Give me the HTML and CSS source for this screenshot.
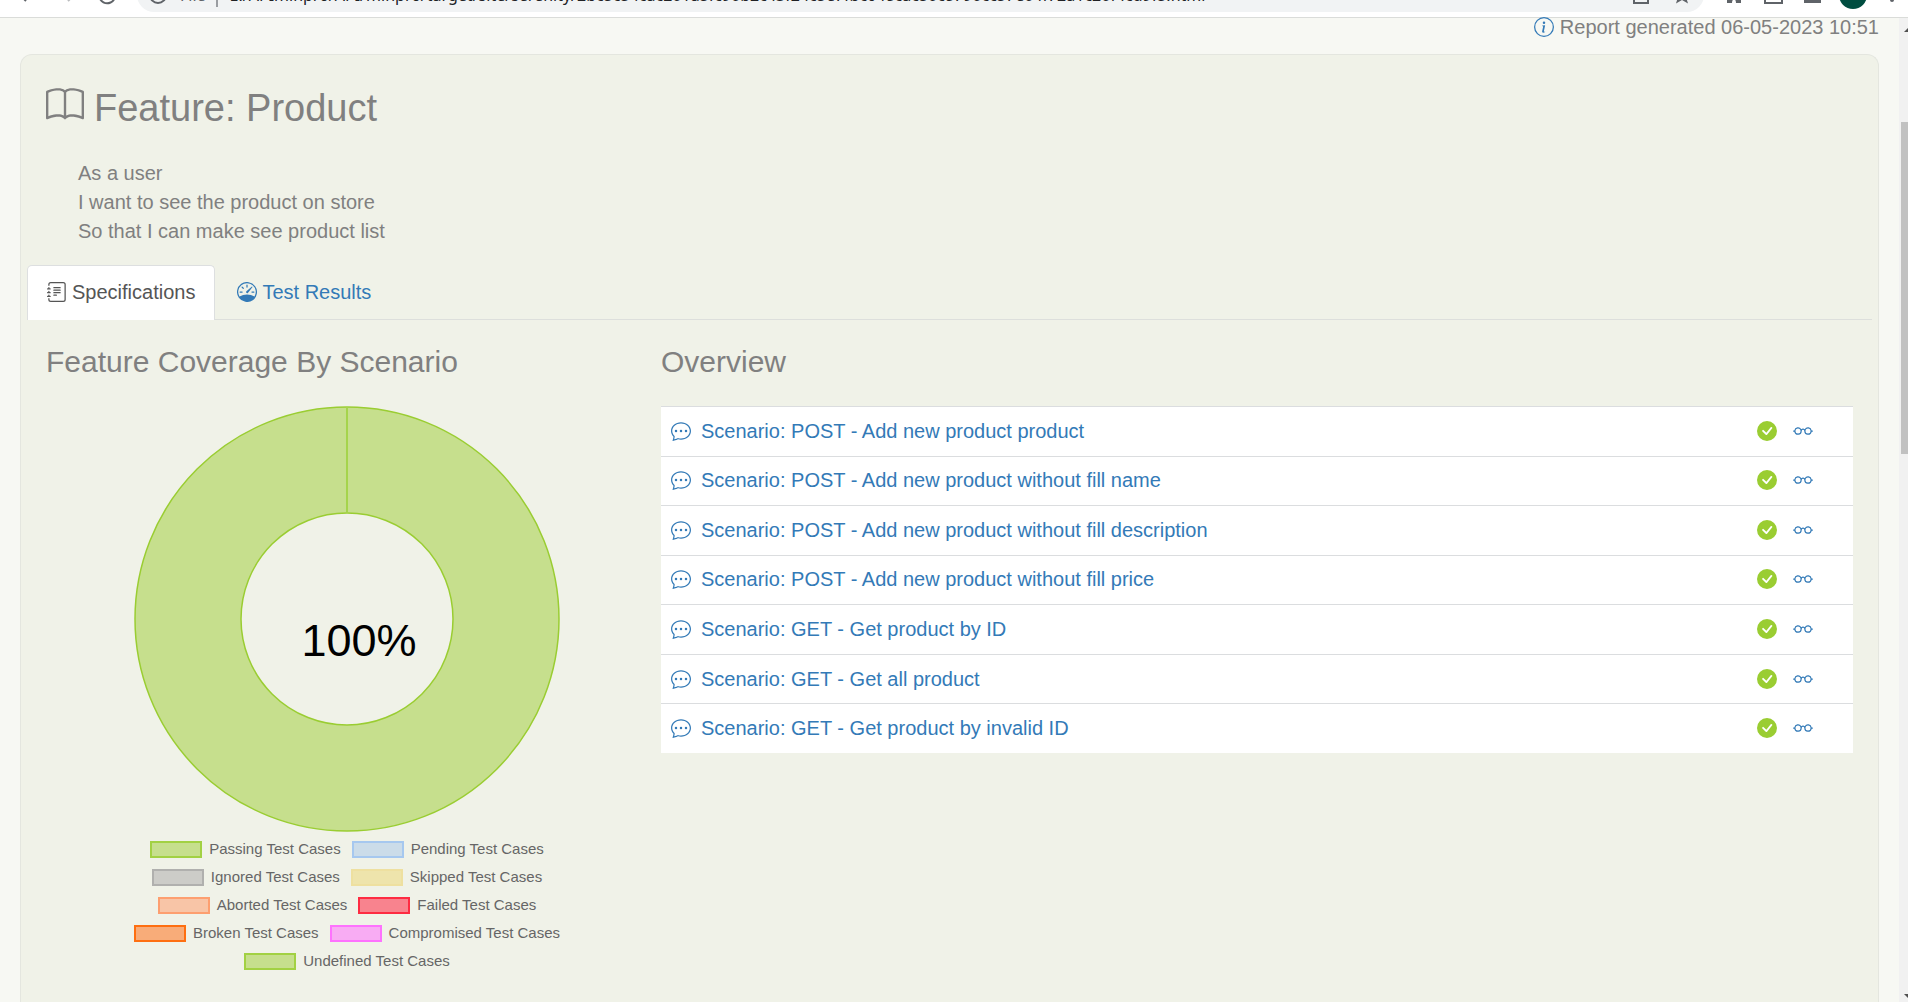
FILE: index.html
```html
<!DOCTYPE html>
<html lang="en">
<head>
<meta charset="utf-8">
<title>Feature: Product</title>
<link rel="stylesheet" href="styles.css">
</head>
<body>
<svg class="sprite" aria-hidden="true">
  <symbol id="book" viewBox="0 0 16 16"><path d="M1 2.828c.885-.37 2.154-.769 3.388-.893 1.33-.134 2.458.063 3.112.752v9.746c-.935-.53-2.12-.603-3.213-.493-1.18.12-2.37.461-3.287.811V2.828zm7.5-.141c.654-.689 1.782-.886 3.112-.752 1.234.124 2.503.523 3.388.893v9.923c-.918-.35-2.107-.692-3.287-.81-1.094-.111-2.278-.039-3.213.492V2.687zM8 1.783C7.015.936 5.587.81 4.287.94c-1.514.153-3.042.672-3.994 1.105A.5.5 0 0 0 0 2.5v11a.5.5 0 0 0 .707.455c.882-.4 2.303-.881 3.68-1.02 1.409-.142 2.59.087 3.223.877a.5.5 0 0 0 .78 0c.633-.79 1.814-1.019 3.222-.877 1.378.139 2.8.62 3.681 1.02A.5.5 0 0 0 16 13.5v-11a.5.5 0 0 0-.293-.455c-.952-.433-2.48-.952-3.994-1.105C10.413.809 8.985.936 8 1.783z"/></symbol>
  <symbol id="info" viewBox="0 0 16 16"><path d="M8 15A7 7 0 1 1 8 1a7 7 0 0 1 0 14zm0 1A8 8 0 1 0 8 0a8 8 0 0 0 0 16z"/><path d="m8.93 6.588-2.29.287-.082.38.45.083c.294.07.352.176.288.469l-.738 3.468c-.194.897.105 1.319.808 1.319.545 0 1.178-.252 1.465-.598l.088-.416c-.2.176-.492.246-.686.246-.275 0-.375-.193-.304-.533L8.93 6.588zM9 4.5a1 1 0 1 1-2 0 1 1 0 0 1 2 0z"/></symbol>
  <symbol id="journal" viewBox="0 0 16 16"><path d="M5 10.5a.5.5 0 0 1 .5-.5h2a.5.5 0 0 1 0 1h-2a.5.5 0 0 1-.5-.5zm0-2a.5.5 0 0 1 .5-.5h5a.5.5 0 0 1 0 1h-5a.5.5 0 0 1-.5-.5zm0-2a.5.5 0 0 1 .5-.5h5a.5.5 0 0 1 0 1h-5a.5.5 0 0 1-.5-.5zm0-2a.5.5 0 0 1 .5-.5h5a.5.5 0 0 1 0 1h-5a.5.5 0 0 1-.5-.5z"/><path d="M3 0h10a2 2 0 0 1 2 2v12a2 2 0 0 1-2 2H3a2 2 0 0 1-2-2v-1h1v1a1 1 0 0 0 1 1h10a1 1 0 0 0 1-1V2a1 1 0 0 0-1-1H3a1 1 0 0 0-1 1v1H1V2a2 2 0 0 1 2-2z"/><path d="M1 5v-.5a.5.5 0 0 1 1 0V5h.5a.5.5 0 0 1 0 1h-2a.5.5 0 0 1 0-1H1zm0 3v-.5a.5.5 0 0 1 1 0V8h.5a.5.5 0 0 1 0 1h-2a.5.5 0 0 1 0-1H1zm0 3v-.5a.5.5 0 0 1 1 0v.5h.5a.5.5 0 0 1 0 1h-2a.5.5 0 0 1 0-1H1z"/></symbol>
  <symbol id="gauge" viewBox="0 0 16 16"><path d="M8 2a.5.5 0 0 1 .5.5V4a.5.5 0 0 1-1 0V2.5A.5.5 0 0 1 8 2zM3.732 3.732a.5.5 0 0 1 .707 0l.915.914a.5.5 0 1 1-.708.708l-.914-.915a.5.5 0 0 1 0-.707zM2 8a.5.5 0 0 1 .5-.5h1.586a.5.5 0 0 1 0 1H2.5A.5.5 0 0 1 2 8zm9.5 0a.5.5 0 0 1 .5-.5h1.5a.5.5 0 0 1 0 1H12a.5.5 0 0 1-.5-.5zm.754-4.246a.389.389 0 0 0-.527-.02L7.547 7.31A.91.91 0 1 0 8.85 8.569l3.434-4.297a.389.389 0 0 0-.029-.518z"/><path fill-rule="evenodd" d="M6.664 15.889A8 8 0 1 1 9.336.11a8 8 0 0 1-2.672 15.78zm-4.665-4.283A11.945 11.945 0 0 1 8 10c2.186 0 4.236.585 6.001 1.606a7 7 0 1 0-12.002 0z"/></symbol>
  <symbol id="chat" viewBox="0 0 16 16"><path d="M5 8a1 1 0 1 1-2 0 1 1 0 0 1 2 0zm4 0a1 1 0 1 1-2 0 1 1 0 0 1 2 0zm3 1a1 1 0 1 0 0-2 1 1 0 0 0 0 2z"/><path d="m2.165 15.803.02-.004c1.83-.363 2.948-.842 3.468-1.105A9.06 9.06 0 0 0 8 15c4.418 0 8-3.134 8-7s-3.582-7-8-7-8 3.134-8 7c0 1.76.743 3.37 1.97 4.6a10.437 10.437 0 0 1-.524 2.318l-.003.011a10.722 10.722 0 0 1-.244.637c-.079.186.074.394.273.362a21.673 21.673 0 0 0 .693-.125zm.8-3.108a1 1 0 0 0-.287-.801C1.618 10.83 1 9.468 1 8c0-3.192 3.004-6 7-6s7 2.808 7 6c0 3.193-3.004 6-7 6a8.06 8.06 0 0 1-2.088-.272 1 1 0 0 0-.711.074c-.387.196-1.24.57-2.634.893a10.97 10.97 0 0 0 .398-2z"/></symbol>
  <symbol id="check" viewBox="0 0 16 16"><path d="M16 8A8 8 0 1 1 0 8a8 8 0 0 1 16 0zm-3.97-3.03a.75.75 0 0 0-1.08.022L7.477 9.417 5.384 7.323a.75.75 0 0 0-1.06 1.06L6.97 11.03a.75.75 0 0 0 1.079-.02l3.992-4.99a.75.75 0 0 0-.01-1.05z"/></symbol>
  <symbol id="glasses" viewBox="0 0 16 16"><path d="M4 6a2 2 0 1 1 0 4 2 2 0 0 1 0-4zm2.625.547a3 3 0 0 0-5.584.953H.5a.5.5 0 0 0 0 1h.541A3 3 0 0 0 7 8a1 1 0 0 1 2 0 3 3 0 0 0 5.959.5h.541a.5.5 0 0 0 0-1h-.541a3 3 0 0 0-5.584-.953A1.993 1.993 0 0 0 8 6c-.532 0-1.016.208-1.375.547zM14 8a2 2 0 1 1-4 0 2 2 0 0 1 4 0z"/></symbol>
</svg>

<header class="toolbar">
  <div class="toolbar-row">
    <button class="tool" aria-label="Back"><svg class="icon" viewBox="0 0 20 20"><path class="line" d="M17 9H3m6-7-7 7 7 7"/></svg></button>
    <button class="tool faded" aria-label="Forward"><svg class="icon" viewBox="0 0 20 20"><path class="line" d="M3 9h14m-6-7 7 7-7 7"/></svg></button>
    <button class="tool" aria-label="Reload"><svg class="icon" viewBox="0 0 20 20"><path class="line" d="M17 6a8 8 0 1 0 1 6M18 2v6h-6"/></svg></button>
    <div class="address">
      <svg class="icon" viewBox="0 0 20 20"><circle class="line" cx="10" cy="10" r="8"/><path class="line" d="M10 5v2m0 2v5"/></svg>
      <label class="scheme" for="url">File</label>
      <input class="url" id="url" type="text" value="E:/APIminpro/API/minpro/target/site/serenity/2bc5c54cac201a5fc90b2c43f24c5e7fbc648cac50c8790cc57e04f72a1c20f4cd9f5.html">
      <button class="tool" aria-label="Share"><svg class="icon" viewBox="0 0 20 20"><path class="line" d="M3 6v12h14V6"/></svg></button>
      <button class="tool" aria-label="Bookmark"><svg class="icon" viewBox="0 0 20 20"><path class="solid" d="m10 1 2.500 6 6.500.5-5 4.500 2 6.500-6-3.500-6 3.500 2-6.500-5-4.500 6.500-.5z"/></svg></button>
    </div>
    <button class="tool" aria-label="Extensions"><svg class="icon" viewBox="0 0 20 20"><path class="solid" d="M3 4h14v14h-5c0-5-4-5-4 0H3z"/></svg></button>
    <button class="tool" aria-label="Side panel"><svg class="icon" viewBox="0 0 20 20"><rect class="line" x="1" y="2" width="17" height="16"/></svg></button>
    <button class="tool" aria-label="Cast"><svg class="icon" viewBox="0 0 20 20"><path class="solid" d="M0 3h17v15H0z"/></svg></button>
    <button class="avatar" aria-label="Profile"></button>
    <button class="tool" aria-label="Menu"><svg class="icon" viewBox="0 0 20 20"><circle class="solid" cx="10" cy="3" r="2"/><circle class="solid" cx="10" cy="9" r="2"/><circle class="solid" cx="10" cy="15" r="2"/></svg></button>
  </div>
</header>

<div class="window">
  <main class="page">
    <p class="generated"><svg class="icon link-color"><use href="#info"/></svg> Report generated 06-05-2023 10:51</p>

    <section class="card">
      <h1 class="title"><svg class="title-icon"><use href="#book"/></svg>Feature: Product</h1>
      <p class="narrative">As a user<br>I want to see the product on store<br>So that I can make see product list</p>

      <nav class="tabs">
        <a class="tab active" href="#specifications"><svg class="icon"><use href="#journal"/></svg>Specifications</a>
        <a class="tab" href="#results"><svg class="icon"><use href="#gauge"/></svg>Test Results</a>
      </nav>

      <div class="columns" id="specifications">
        <section class="coverage">
          <h2 class="heading">Feature Coverage By Scenario</h2>
          <figure class="chart">
            <svg class="donut" viewBox="0 0 426 426" role="img" aria-label="100% passing">
              <path class="slice" fill-rule="evenodd" d="M213 1a212 212 0 1 1 0 424a212 212 0 1 1 0-424zM213 107a106 106 0 1 0 0 212a106 106 0 1 0 0-212z"/>
              <path class="seam" d="M213 1v106"/>
              <text class="percent" x="225" y="250" text-anchor="middle">100%</text>
            </svg>
            <ul class="legend">
              <li class="key"><span class="swatch passing"></span>Passing Test Cases</li>
              <li class="key"><span class="swatch pending"></span>Pending Test Cases</li>
              <li class="key"><span class="swatch ignored"></span>Ignored Test Cases</li>
              <li class="key"><span class="swatch skipped"></span>Skipped Test Cases</li>
              <li class="key"><span class="swatch aborted"></span>Aborted Test Cases</li>
              <li class="key"><span class="swatch failed"></span>Failed Test Cases</li>
              <li class="key"><span class="swatch broken"></span>Broken Test Cases</li>
              <li class="key"><span class="swatch compromised"></span>Compromised Test Cases</li>
              <li class="key"><span class="swatch passing"></span>Undefined Test Cases</li>
            </ul>
          </figure>
        </section>

        <section class="overview">
          <h2 class="heading">Overview</h2>
          <table class="scenarios">
            <colgroup><col class="col-type"><col><col class="col-result"><col class="col-view"></colgroup>
            <tbody>
              <tr><td class="type"><svg class="icon"><use href="#chat"/></svg></td><td><a class="link" href="#s1">Scenario: POST - Add new product product</a></td><td><svg class="icon pass"><use href="#check"/></svg></td><td><a class="link" href="#s1" aria-label="View"><svg class="icon"><use href="#glasses"/></svg></a></td></tr>
              <tr><td class="type"><svg class="icon"><use href="#chat"/></svg></td><td><a class="link" href="#s2">Scenario: POST - Add new product without fill name</a></td><td><svg class="icon pass"><use href="#check"/></svg></td><td><a class="link" href="#s2" aria-label="View"><svg class="icon"><use href="#glasses"/></svg></a></td></tr>
              <tr><td class="type"><svg class="icon"><use href="#chat"/></svg></td><td><a class="link" href="#s3">Scenario: POST - Add new product without fill description</a></td><td><svg class="icon pass"><use href="#check"/></svg></td><td><a class="link" href="#s3" aria-label="View"><svg class="icon"><use href="#glasses"/></svg></a></td></tr>
              <tr><td class="type"><svg class="icon"><use href="#chat"/></svg></td><td><a class="link" href="#s4">Scenario: POST - Add new product without fill price</a></td><td><svg class="icon pass"><use href="#check"/></svg></td><td><a class="link" href="#s4" aria-label="View"><svg class="icon"><use href="#glasses"/></svg></a></td></tr>
              <tr><td class="type"><svg class="icon"><use href="#chat"/></svg></td><td><a class="link" href="#s5">Scenario: GET - Get product by ID</a></td><td><svg class="icon pass"><use href="#check"/></svg></td><td><a class="link" href="#s5" aria-label="View"><svg class="icon"><use href="#glasses"/></svg></a></td></tr>
              <tr><td class="type"><svg class="icon"><use href="#chat"/></svg></td><td><a class="link" href="#s6">Scenario: GET - Get all product</a></td><td><svg class="icon pass"><use href="#check"/></svg></td><td><a class="link" href="#s6" aria-label="View"><svg class="icon"><use href="#glasses"/></svg></a></td></tr>
              <tr><td class="type"><svg class="icon"><use href="#chat"/></svg></td><td><a class="link" href="#s7">Scenario: GET - Get product by invalid ID</a></td><td><svg class="icon pass"><use href="#check"/></svg></td><td><a class="link" href="#s7" aria-label="View"><svg class="icon"><use href="#glasses"/></svg></a></td></tr>
            </tbody>
          </table>
        </section>
      </div>
    </section>
  </main>

  <div class="scrollbar" aria-hidden="true">
    <span class="arrow up"></span>
    <span class="thumb"></span>
    <span class="arrow down"></span>
  </div>
</div>
</body>
</html>
```
FILE: styles.css
```css
* { box-sizing: border-box; }

body {
  margin: 0;
  min-height: 100vh;
  display: flex;
  flex-direction: column;
  background: #f7f8f3;
  color: #808080;
  font: 20px/28px "Liberation Sans", Arial, sans-serif;
}

h1, h2, p, ul, figure { margin: 0; padding: 0; font-weight: 400; }
button { border: 0; padding: 0; background: none; }
a { text-decoration: none; }

.sprite { position: absolute; width: 0; height: 0; }
.icon { display: block; flex: none; width: 20px; height: 20px; fill: currentColor; }

/* Browser toolbar, scrolled mostly out of view */
.toolbar {
  height: 18px;
  overflow: hidden;
  display: flex;
  align-items: flex-end;
  background: #fff;
  border-bottom: 1px solid #dadcd9;
}
.toolbar-row {
  flex: 1;
  display: flex;
  align-items: center;
  gap: 20px;
  height: 34px;
  margin-bottom: 5px;
  padding: 0 6px 0 17px;
}
.tool { color: #5f6368; }
.faded { color: #babcbe; }
.line { fill: none; stroke: currentColor; stroke-width: 2; }
.solid { fill: currentColor; }
.address {
  flex: 1;
  display: flex;
  align-items: center;
  gap: 12px;
  height: 34px;
  padding: 0 12px 0 11px;
  border-radius: 17px;
  background: #f1f3f4;
  color: #5f6368;
  font: 16px/24px "Noto Sans", sans-serif;
}
.scheme { padding-right: 10px; border-right: 2px solid #9a9da1; }
.url {
  flex: 1;
  min-width: 0;
  height: 24px;
  padding: 0;
  border: 0;
  background: none;
  color: #202124;
  font: inherit;
}
.address .tool + .tool { margin-left: 9px; }
.avatar { width: 28px; height: 28px; margin: 0 -5px; border-radius: 50%; background: #004d40; }

/* Window body */
.window { flex: 1; display: flex; }
.page { flex: 1; display: flex; flex-direction: column; padding: 0 20px; }

.generated {
  display: flex;
  align-items: center;
  justify-content: flex-end;
  gap: 6px;
  height: 18px;
  line-height: 18px;
  margin-bottom: 18px;
}
.link-color { color: #337ab7; }

.card {
  flex: 1;
  padding: 31px 6px 24px;
  border: 1px solid #e4e6df;
  border-bottom: 0;
  border-radius: 12px 12px 0 0;
  background: #f0f2e8;
}
.title {
  display: flex;
  align-items: center;
  gap: 10px;
  margin-bottom: 29px;
  padding-left: 19px;
  font-size: 38px;
  line-height: 44px;
}
.title-icon { width: 38px; height: 38px; margin-bottom: 6px; fill: currentColor; }
.narrative { margin-bottom: 19px; padding-left: 51px; line-height: 29px; }

.tabs { display: flex; gap: 2px; border-bottom: 1px solid #dddfdc; }
.tab {
  display: flex;
  align-items: center;
  gap: 5px;
  padding: 12px 19px 13px;
  border: 1px solid transparent;
  border-bottom: 0;
  border-radius: 5px 5px 0 0;
  color: #337ab7;
}
.tab.active {
  margin-bottom: -1px;
  padding-bottom: 14px;
  border-color: #dddfe0;
  background: #fff;
  color: #555;
}

.columns { display: grid; grid-template-columns: 1fr 2fr; padding-top: 24px; }
.coverage { min-width: 0; padding-left: 19px; }
.overview { min-width: 0; padding: 0 19px; }
.heading { margin-bottom: 26px; font-size: 30px; line-height: 36px; }

/* Coverage chart */
.chart { width: 602px; display: flex; flex-direction: column; align-items: center; }
.donut { display: block; width: 426px; height: 426px; }
.slice { fill: #c6df8d; stroke: #9acd32; stroke-width: 1.5; }
.seam { stroke: #a5d44c; stroke-width: 2; }
.percent { fill: #000; font-size: 45px; }

.legend {
  display: flex;
  flex-wrap: wrap;
  justify-content: center;
  column-gap: 11px;
  width: 450px;
  margin-top: 3px;
  list-style: none;
  color: #666;
  font-size: 15px;
}
.key { display: flex; align-items: center; gap: 7px; }
.swatch { width: 52px; height: 17px; border: 2px solid; }
.passing { background: #c6df8d; border-color: #a2d143; }
.pending { background: #cbdce9; border-color: #a6c8ef; }
.ignored { background: #ccccc8; border-color: #b0b0ae; }
.skipped { background: #eee4ac; border-color: #eee0a0; }
.aborted { background: #f8c5a7; border-color: #fd9f70; }
.failed { background: #f8838e; border-color: #fe2c42; }
.broken { background: #f8ac79; border-color: #fe6f11; }
.compromised { background: #f8acf3; border-color: #fe72fe; }

/* Scenario list */
.scenarios {
  width: 100%;
  height: 347px;
  table-layout: fixed;
  border-spacing: 0;
  background: #fff;
}
.scenarios td { padding: 0 0 1px; border-top: 1px solid #dbdddf; vertical-align: middle; }
.scenarios .type { padding-left: 10px; color: #337ab7; }
.col-type { width: 40px; }
.col-result { width: 36px; }
.col-view { width: 60px; }
.link { color: #337ab7; }
.pass { color: #9acd32; }

/* Scrollbar */
.scrollbar {
  width: 9px;
  display: flex;
  flex-direction: column;
  align-items: flex-end;
  overflow: hidden;
  background: #f1f1f1;
}
.thumb { width: 7px; height: 332px; margin-top: 90px; background: #c1c1c1; }
.arrow { width: 0; height: 0; border-left: 4px solid transparent; }
.up { margin-top: 10px; border-bottom: 4px solid #505050; }
.down { margin-top: auto; margin-bottom: 4px; border-top: 4px solid #505050; }
```
